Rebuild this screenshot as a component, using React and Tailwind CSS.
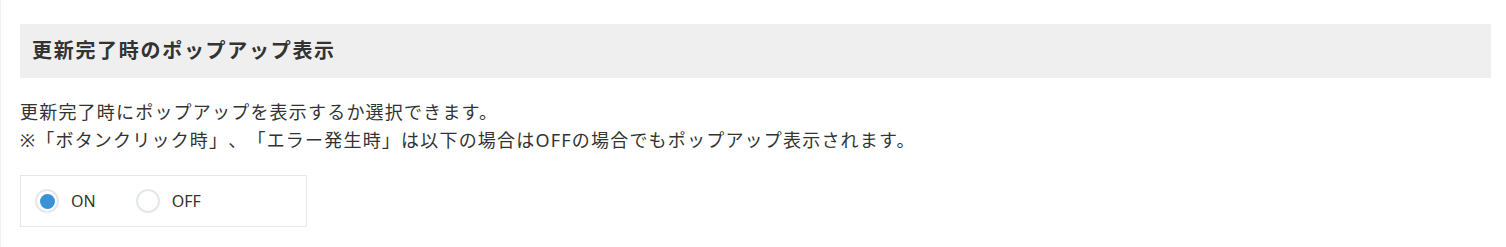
import { useState } from 'react';

const FONT = { fontFamily: '"Noto Sans", "Noto Sans CJK JP", sans-serif' };

function Radio({ checked, label, onClick }) {
  return (
    <button type="button" onClick={onClick} className="flex items-center gap-3 outline-none">
      <span className="w-6 h-6 rounded-full border-2 border-[#e4e8ea] bg-white flex items-center justify-center">
        {checked && <span className="w-[15px] h-[15px] rounded-full bg-[#3a93d6]" />}
      </span>
      <span className="text-[16px] text-[#333] leading-none">{label}</span>
    </button>
  );
}

export default function App() {
  const [popup, setPopup] = useState(true);

  return (
    <div className="min-h-[247px] bg-white border-l border-[#f2f2f2] pl-[19px] pr-[15px] pt-6 [text-spacing-trim:space-all]" style={FONT}>
      {/* Section title */}
      <div className="h-[54px] bg-[#efefef] flex items-center pl-3">
        <h2 className="text-[20px] font-bold text-[#333] tracking-[1.7px]">更新完了時のポップアップ表示</h2>
      </div>

      {/* Description */}
      <div className="mt-5 text-[18px] leading-[28px] text-[#333] tracking-[1.2px]">
        <p>更新完了時にポップアップを表示するか選択できます。</p>
        <p>※「ボタンクリック時」、「エラー発生時」は以下の場合はOFFの場合でもポップアップ表示されます。</p>
      </div>

      {/* Options */}
      <div className="mt-[21px] w-[287px] h-[52px] border border-[#e3e8e9] flex items-center pl-[14px] gap-10">
        <Radio checked={popup} label="ON" onClick={() => setPopup(true)} />
        <Radio checked={!popup} label="OFF" onClick={() => setPopup(false)} />
      </div>
    </div>
  );
}
